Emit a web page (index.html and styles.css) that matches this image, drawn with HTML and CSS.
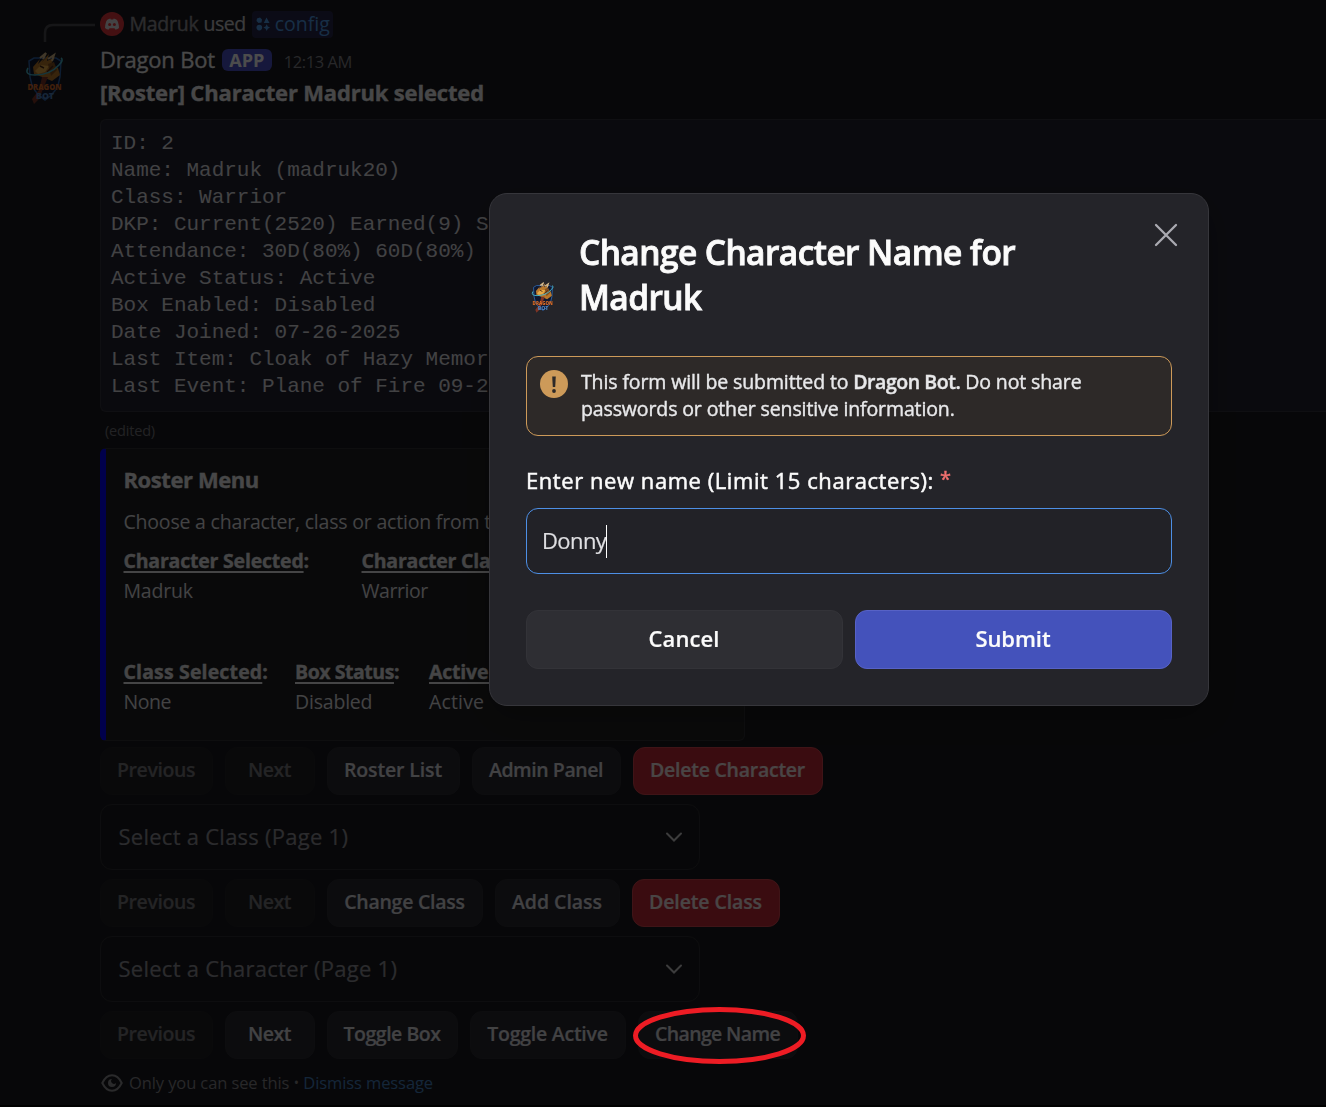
FILE: index.html
```html
<!DOCTYPE html>
<html lang="en">
<head>
<meta charset="utf-8">
<title>Dragon Bot</title>
<link rel="stylesheet" href="styles.css">
</head>
<body>
<svg class="defs" aria-hidden="true">
  <symbol id="crest" viewBox="0 0 40 54" overflow="visible">
    <path d="M4 9 L9 6 L31 6 L36 9 L35 25 Q33 40 20 48 Q7 40 5 25Z" fill="#10182f" stroke="#2c62a8" stroke-width="1.500"/>
    <path d="M8 15 L15 7 L13 12 L20 5 L17 10 L24 2 L22 9 L30 5 L26 12 L33 16 L35 23 L27 29 L20 26 L9 22Z" fill="#b9782b"/>
    <path d="M15 6 L21 1 L18 7 M23 7 L29 3 L27 9" stroke="#d8b98a" stroke-width="2" fill="none"/>
    <path d="M10 19 L16 13 L24 14 L20 20 L13 22Z" fill="#e8ac48"/>
    <path d="M23 12 L29 10 L32 18 L26 24Z" fill="#83501f"/>
    <path d="M15 14 L19 16 M22 20 L28 14" stroke="#4d2a17" stroke-width="1.500"/>
    <path d="M3 16 Q-1 23 10 23 Q25 23 34 13 Q39 8 36 6" stroke="#47b6ca" stroke-width="1.600" fill="none"/>
    <path d="M17 25 L23 25 L18 37 L14 47 L9 52 L7 47 L14 38Z" fill="#7d3425"/>
    <text x="2.500" y="38" class="crest-top" textLength="34" lengthAdjust="spacingAndGlyphs">DRAGON</text>
    <text x="11" y="47" class="crest-bottom" textLength="18" lengthAdjust="spacingAndGlyphs">BOT</text>
  </symbol>
</svg>
<main class="chat">
  <div class="reply">
    <svg class="spine" viewBox="0 0 52 20"><path d="M2 19 V10 Q2 2 10 2 H52" fill="none" stroke="#4a4a50" stroke-width="2.500"/></svg>
    <svg class="face" viewBox="0 0 24 24"><circle cx="12" cy="12" r="12" fill="#e5383c"/><path d="M8.300 7.200 10.300 6.500 10.800 7.500 H13.200 L13.700 6.500 15.700 7.200 Q18.500 8 19 16 Q17 17.700 15.200 17.600 L14.500 16.300 H9.500 L8.800 17.600 Q7 17.700 5 16 Q5.500 8 8.300 7.200Z" fill="#e2e2e4"/><circle cx="9.600" cy="12.600" r="1.500" fill="#e5383c"/><circle cx="14.400" cy="12.600" r="1.500" fill="#e5383c"/></svg>
    <span class="user">Madruk</span><span class="used">used</span>
    <span class="command"><svg viewBox="0 0 14 14"><path d="M1 1.500 L4 .5 6 2.500 5.500 5.500 2.500 6 .5 4Z M10.500 .5 13.500 6 H7.800Z M10.700 7.200 11.800 9.500 14 10.600 11.800 11.700 10.700 14 9.600 11.700 7.400 10.600 9.600 9.500Z" fill="#4e9ce8"/><circle cx="3.300" cy="10.600" r="2.800" fill="#4e9ce8"/></svg>config</span>
  </div>
  <div class="author">
    <svg class="avatar"><use href="#crest"/></svg>
    <span class="name">Dragon Bot</span><span class="badge">APP</span><time>12:13 AM</time>
  </div>
  <h3 class="headline">[Roster] Character Madruk selected</h3>
  <pre class="code">ID: 2
Name: Madruk (madruk20)
Class: Warrior
DKP: Current(2520) Earned(9) Spent(0)
Attendance: 30D(80%) 60D(80%) 90D(80%)
Active Status: Active
Box Enabled: Disabled
Date Joined: 07-26-2025
Last Item: Cloak of Hazy Memories
Last Event: Plane of Fire 09-20-2025</pre>
  <div class="edited">(edited)</div>
  <section class="embed">
    <h4>Roster Menu</h4>
    <p>Choose a character, class or action from the list</p>
    <div class="fields fields-top">
      <div><b><u>Character Selected</u>:</b><span>Madruk</span></div>
      <div><b><u>Character Class</u>:</b><span class="tight">Warrior</span></div>
    </div>
    <div class="fields fields-bottom">
      <div><b class="loose"><u>Class Selected</u>:</b><span class="tight">None</span></div>
      <div><b class="tight"><u>Box Status</u>:</b><span>Disabled</span></div>
      <div><b><u>Active Status</u>:</b><span class="loose">Active</span></div>
    </div>
  </section>
  <div class="row">
    <button class="previous off">Previous</button><button class="next off">Next</button><button class="roster-list">Roster List</button><button class="admin-panel">Admin Panel</button><button class="delete-character danger">Delete Character</button>
  </div>
  <div class="select">Select a Class (Page 1)<svg viewBox="0 0 18 12"><path d="M2 2.500 9 9.500 16 2.500"/></svg></div>
  <div class="row">
    <button class="previous off">Previous</button><button class="next off">Next</button><button class="change-class">Change Class</button><button class="add-class">Add Class</button><button class="delete-class danger">Delete Class</button>
  </div>
  <div class="select">Select a Character (Page 1)<svg viewBox="0 0 18 12"><path d="M2 2.500 9 9.500 16 2.500"/></svg></div>
  <div class="row">
    <button class="previous off">Previous</button><button class="next">Next</button><button class="toggle-box">Toggle Box</button><button class="toggle-active">Toggle Active</button><button class="change-name">Change Name</button>
  </div>
  <div class="note"><svg viewBox="0 0 22 18"><path d="M1.300 9 Q5 1.300 11 1.300 T20.700 9 Q17 16.700 11 16.700 T1.300 9Z" fill="none" stroke="#8c8c92" stroke-width="2"/><path d="M11 5 A4 4 0 1 0 15 9 A2.200 2.200 0 0 1 11 5Z" fill="#8c8c92"/></svg><span>Only you can see this</span><i>•</i><a>Dismiss message</a></div>
</main>
<div class="backdrop">
  <form class="modal">
    <svg class="close" viewBox="0 0 24 24"><path d="M2 2 22 22 M22 2 2 22"/></svg>
    <header><svg class="crest"><use href="#crest"/></svg><h2>Change Character Name for<br>Madruk</h2></header>
    <div class="alert"><svg viewBox="0 0 28 28"><circle cx="14" cy="14" r="14" fill="#cd9a59"/><path d="M12.200 6.500 H15.800 L15.200 17 H12.800Z" fill="#2d2928"/><circle cx="14" cy="21" r="1.900" fill="#2d2928"/></svg><p>This form will be submitted to <b>Dragon Bot.</b> Do not share<br>passwords or other sensitive information.</p></div>
    <label>Enter new name (Limit 15 characters):<em>*</em></label>
    <div class="input">Donny<i></i></div>
    <footer><div class="action cancel">Cancel</div><div class="action primary">Submit</div></footer>
  </form>
</div>
<svg class="ring" viewBox="0 0 173 57"><ellipse cx="86.500" cy="28.500" rx="84" ry="26"/></svg>
</body>
</html>
```
FILE: styles.css
```css
* { box-sizing: border-box; }
body {
  margin: 0;
  width: 1326px;
  height: 1107px;
  overflow: hidden;
  background: #1a1a1e;
  color: #dfdfe2;
  font-family: "Open Sans", "Noto Sans", sans-serif;
}
h2, h3, h4, p, pre { margin: 0; }
.defs { position: absolute; width: 0; height: 0; }
.avatar, .crest { overflow: visible; }
.crest-top { font: 800 9.5px "Open Sans", sans-serif; fill: #d96a24; }
.crest-bottom { font: 800 9px "Open Sans", sans-serif; fill: #4d7fba; }
.chat {
  display: flex;
  flex-direction: column;
  height: 1107px;
  padding: 11px 0 0 100px;
  border-bottom: 2px solid #000;
  white-space: nowrap;
}
.reply { display: flex; align-items: center; height: 27px; margin-left: -57px; font-size: 19.5px; line-height: 25px; }
.spine { width: 52px; height: 20px; margin: 12px 5px 0 0; align-self: flex-start; }
.face { width: 24px; height: 24px; margin: 0 5.5px 2px 0; }
.user { height: 27px; color: #929298; letter-spacing: -.25px; -webkit-text-stroke: .4px; }
.used { height: 27px; margin-left: 5px; color: #c8c8cc; letter-spacing: -.5px; -webkit-text-stroke: .2px; }
.command { display: flex; align-items: center; height: 27px; margin-left: 6px; padding: 0 3px 2px 4px; border-radius: 4px; background: #26274a; color: #4e9ce8; }
.command svg { width: 14px; height: 14px; margin-right: 5px; }
.author { display: flex; align-items: center; height: 32px; margin: 5px 0 0 -75px; }
.avatar { width: 40px; height: 54px; margin: 40px 35px 0 0; }
.name { color: #f0f0f2; font-size: 22px; letter-spacing: -.2px; -webkit-text-stroke: .3px; }
.badge { width: 50px; height: 22px; margin: 1px 0 0 7px; border-radius: 6px; background: #4a50c8; color: #fff; font-size: 18px; font-weight: 700; line-height: 22px; text-align: center; }
time { margin: 4px 0 0 12px; color: #85858c; font-size: 16.5px; letter-spacing: -.45px; }
.headline { margin-top: 1px; color: #efeff0; font-size: 22px; font-weight: 700; letter-spacing: -.17px; line-height: 32px; -webkit-text-stroke: .3px; }
.code {
  height: 293px;
  margin-top: 11px;
  padding: 10px;
  border: 1px solid #32323c;
  border-right: 0;
  border-radius: 6px 0 0 6px;
  background: #242430;
  color: #dcdce0;
  font: 21px/27px "Liberation Mono", monospace;
  letter-spacing: -.02px;
}
.edited { height: 24px; margin: 7px 0 0 5px; color: #74747b; font-size: 14.5px; letter-spacing: -.18px; line-height: 24px; }
.embed { width: 645px; height: 293px; margin-top: 5px; padding: 14px 17.5px; border: 1px solid #303034; border-left: 6px solid #0000ff; border-radius: 6px; background: #212122; font-size: 19.5px; letter-spacing: -.2px; }
.embed h4 { color: #efeff0; font-size: 22px; letter-spacing: -.42px; line-height: 32px; -webkit-text-stroke: .3px; }
.embed p { margin-top: 13px; line-height: 27px; }
.fields { display: grid; line-height: 30px; }
.fields-top { grid-template-columns: 238px 250px; margin-top: 11px; }
.fields-bottom { grid-template-columns: 171.5px 134px 200px; margin-top: 51px; }
.fields b { display: block; color: #e8e8ea; -webkit-text-stroke: .3px; }
.fields u { text-underline-offset: 3px; text-decoration-thickness: 2px; }
.fields .tight { letter-spacing: -.45px; }
.fields .loose { letter-spacing: .15px; }
.row { display: flex; gap: 12px; height: 48px; margin-top: 6px; }
.select + .row { margin-top: 9px; }
button { height: 48px; padding: 0 1px 3px 0; border: 1px solid #2c2c33; border-radius: 12px; background: #28282f; color: #dcdce0; font: 600 19.5px "Open Sans", sans-serif; letter-spacing: -.25px; -webkit-text-stroke: .2px; }
.off { border-color: #222226; background: #1f1f23; color: #78787e; }
.danger { border-color: #d2444e; background: #c42a36; color: #f4e6e8; }
.previous { width: 113px; letter-spacing: -.4px; }
.next { width: 90px; letter-spacing: -.45px; }
.roster-list { width: 133px; letter-spacing: -.14px; }
.admin-panel { width: 149px; letter-spacing: -.44px; }
.delete-character { width: 190px; }
.change-class { width: 156px; }
.add-class { width: 125px; letter-spacing: -.04px; }
.delete-class { width: 148px; letter-spacing: -.11px; }
.toggle-box { width: 131px; letter-spacing: -.48px; }
.toggle-active { width: 156px; }
.change-name { width: 160px; letter-spacing: -.63px; }
.select { display: flex; align-items: center; justify-content: space-between; width: 600px; height: 66px; margin-top: 9px; padding: 0 16px 2px 17.5px; border: 1px solid #2d2d32; border-radius: 12px; color: #929299; font-size: 22px; letter-spacing: .26px; -webkit-text-stroke: .2px; }
.select svg { width: 18px; height: 12px; margin-top: 2px; fill: none; stroke: #c8c8cc; stroke-width: 2; stroke-linecap: round; }
.note { display: flex; align-items: center; height: 24px; margin-top: 11px; color: #85858b; font-size: 16.5px; letter-spacing: -.1px; }
.note svg { width: 22px; height: 18px; margin: 1px 6px 0 1px; }
.note i { width: 14px; text-align: center; font-style: normal; font-size: 14px; }
.note a { color: #4580c0; }
.backdrop { position: fixed; inset: 0; padding: 193px 0 0 489px; background: rgba(0, 0, 0, .7); }
.modal { position: relative; width: 720px; height: 513px; padding: 36px; border: 1px solid #36363b; border-radius: 18px; background: #242429; box-shadow: 0 12px 36px rgba(0, 0, 0, .25); color: #fbfbfb; white-space: nowrap; }
.close { position: absolute; top: 29px; right: 30px; width: 24px; height: 24px; stroke: #aaaab1; stroke-width: 2.300; stroke-linecap: round; }
.modal header { display: flex; height: 90px; }
.crest { width: 24px; height: 32px; margin: 52px 24px 0 5px; }
.modal h2 { font-size: 33.5px; font-weight: 600; letter-spacing: -.58px; line-height: 45px; -webkit-text-stroke: .8px; }
.alert { display: flex; height: 80px; margin-top: 36px; padding: 11px 13px; border: 1px solid #cd9a59; border-radius: 12px; background: #2d2928; color: #e8e8ea; font-size: 19.5px; letter-spacing: -.12px; line-height: 27px; -webkit-text-stroke: .4px; }
.alert svg { width: 28px; height: 28px; margin: 2px 13px 0 0; }
.alert b { font-weight: 600; letter-spacing: -.45px; }
.modal label { display: flex; height: 30px; margin-top: 29px; font-size: 22px; letter-spacing: .56px; line-height: 30px; -webkit-text-stroke: .5px; }
.modal em { margin-left: 6px; color: #f0706f; font-size: 20px; font-style: normal; line-height: 28px; }
.input { display: flex; align-items: center; height: 66px; margin-top: 13px; padding: 0 0 2px 15px; border: 1px solid #4d8fe5; border-radius: 12px; background: #222227; color: #dfdfe2; font-size: 22px; letter-spacing: -.6px; -webkit-text-stroke: .2px; }
.input i { width: 1px; height: 33px; margin-top: 2px; background: #fff; }
.modal footer { display: grid; grid-template-columns: 1fr 1fr; gap: 12px; margin-top: 36px; }
.action { height: 59px; padding-right: 1px; border: 1px solid #333338; border-radius: 12px; background: #2e2e33; font-size: 22px; font-weight: 600; line-height: 55px; text-align: center; -webkit-text-stroke: .2px; }
.cancel { letter-spacing: .1px; }
.primary { border-color: #5762c6; background: #4452bb; letter-spacing: -.1px; }
.ring { position: absolute; left: 633px; top: 1007px; width: 173px; height: 57px; fill: none; stroke: #ed1c24; stroke-width: 5; }
```
